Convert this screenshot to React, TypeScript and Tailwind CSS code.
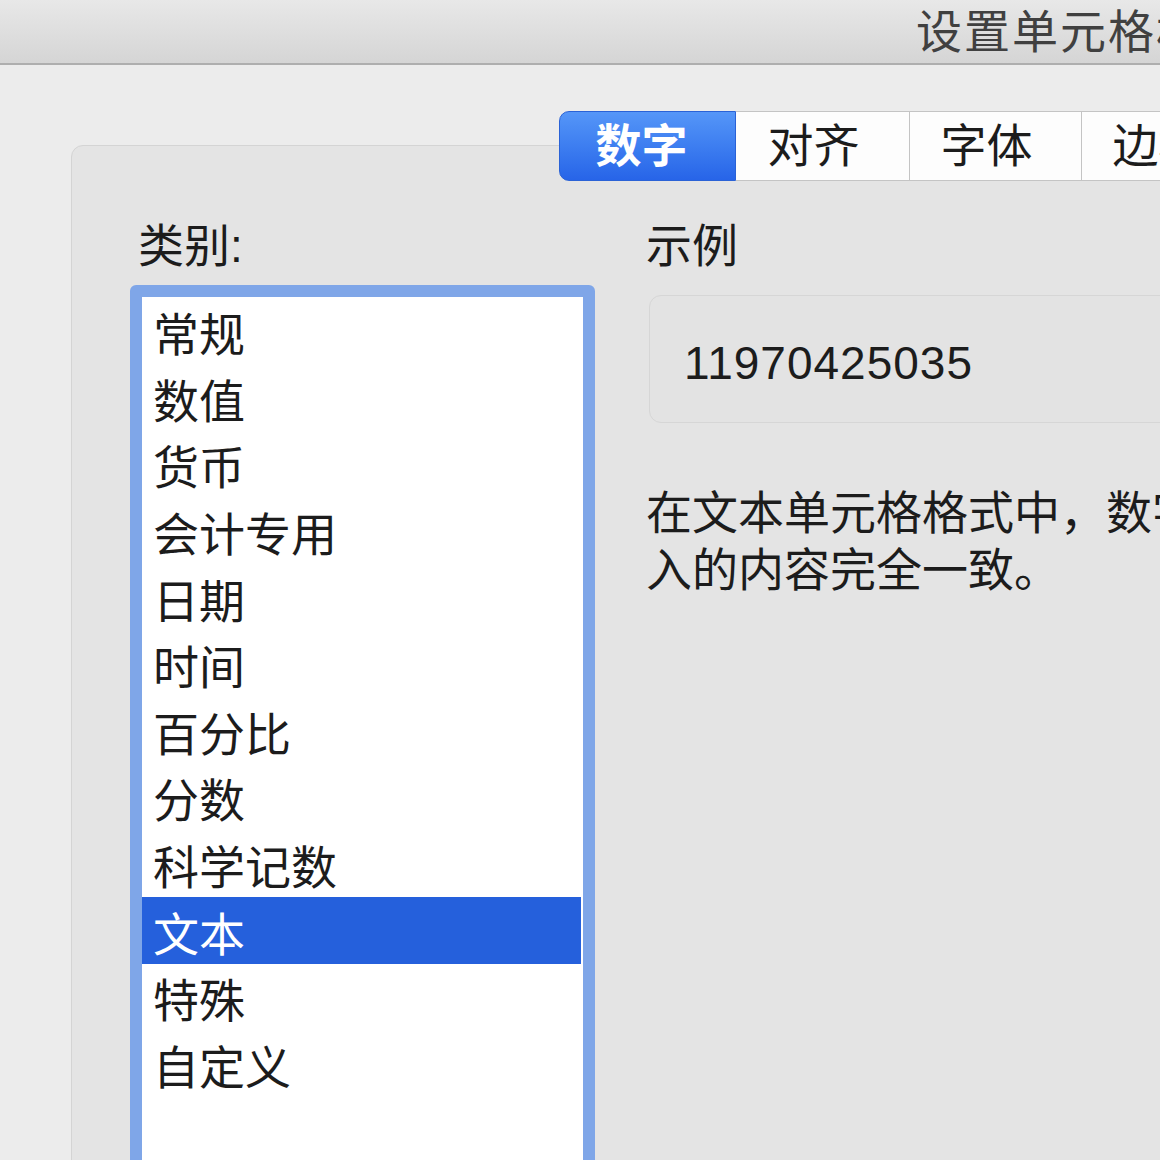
import React from "react";

const FONT = '"Liberation Sans", "Noto Sans CJK SC", sans-serif';

const items = ["常规", "数值", "货币", "会计专用", "日期", "时间", "百分比", "分数", "科学记数", "文本", "特殊", "自定义"];

export default function App() {
  return (
    <div
      className="w-[1160px] h-[1160px] overflow-hidden bg-[#ececec] text-[#1c1c1c]"
      style={{ fontFamily: FONT }}
    >
      {/* Title bar */}
      <div className="h-[65px] bg-gradient-to-b from-[#e8e8e8] to-[#d5d5d5] border-b-2 border-[#aeaeae] flex items-center pl-[916px] whitespace-nowrap overflow-hidden">
        <span className="shrink-0 text-[46px] leading-none text-[#404040] tracking-[2px]">设置单元格格式</span>
      </div>

      {/* Tabs */}
      <div className="relative z-10 mt-[46px] pl-[559px] flex whitespace-nowrap">
        <div className="shrink-0 w-[177px] h-[70px] rounded-l-[10px] bg-gradient-to-b from-[#5596f8] to-[#2764e8] border border-[#2a62d6] flex items-center justify-center pr-[12px] text-white text-[46px] font-bold leading-none">
          数字
        </div>
        <div className="shrink-0 w-[174px] h-[70px] bg-[#fdfdfd] border-y border-r border-[#c4c4c4] flex items-center justify-center pr-[18px] text-[46px] leading-none">
          对齐
        </div>
        <div className="shrink-0 w-[172px] h-[70px] bg-[#fdfdfd] border-y border-r border-[#c4c4c4] flex items-center justify-center pr-[18px] text-[46px] leading-none">
          字体
        </div>
        <div className="shrink-0 w-[172px] h-[70px] bg-[#fdfdfd] border-y border-r border-[#c4c4c4] flex items-center justify-center pr-[18px] text-[46px] leading-none">
          边框
        </div>
      </div>

      {/* Panel */}
      <div className="-mt-[36px] ml-[71px] w-[1200px] h-[1100px] rounded-[12px] bg-[#e4e4e4] border border-[#d4d4d4] flex pl-[58px] pt-[72px] gap-[51px]">
        {/* Left column */}
        <div className="shrink-0 w-[465px] flex flex-col">
          <div className="pl-[8px] text-[46px] leading-[56px]">类别:</div>
          <div className="mt-[11px] w-[465px] h-[900px] rounded-[6px] border-[12px] border-[#7fa6e8] bg-white">
            <div className="flex flex-col pt-[1px]">
              {items.map((it) => (
                <div
                  key={it}
                  className={
                    it === "文本"
                      ? "h-[66.6px] flex items-center pl-[11px] pt-[8px] bg-[#2560dc] text-white text-[46px] leading-none mr-[2px]"
                      : "h-[66.6px] flex items-center pl-[11px] pt-[8px] text-[46px] leading-none"
                  }
                >
                  {it}
                </div>
              ))}
            </div>
          </div>
        </div>

        {/* Right column */}
        <div className="flex flex-col">
          <div className="text-[46px] leading-[56px]">示例</div>
          <div className="mt-[21px] ml-[3px] w-[700px] h-[128px] rounded-[12px] bg-[#e3e3e3] border border-[#d6d6d6] flex items-center pl-[34px] pt-[8px]">
            <span className="text-[46px] leading-none tracking-[1px] text-[#1c1c1c]">11970425035</span>
          </div>
          <div className="mt-[62px] w-[1000px] text-[46px] leading-[57px]">
            <div className="whitespace-nowrap">在文本单元格格式中，数字作为文本处理。单元格显示的内容与输</div>
            <div className="whitespace-nowrap">入的内容完全一致。</div>
          </div>
        </div>
      </div>
    </div>
  );
}
